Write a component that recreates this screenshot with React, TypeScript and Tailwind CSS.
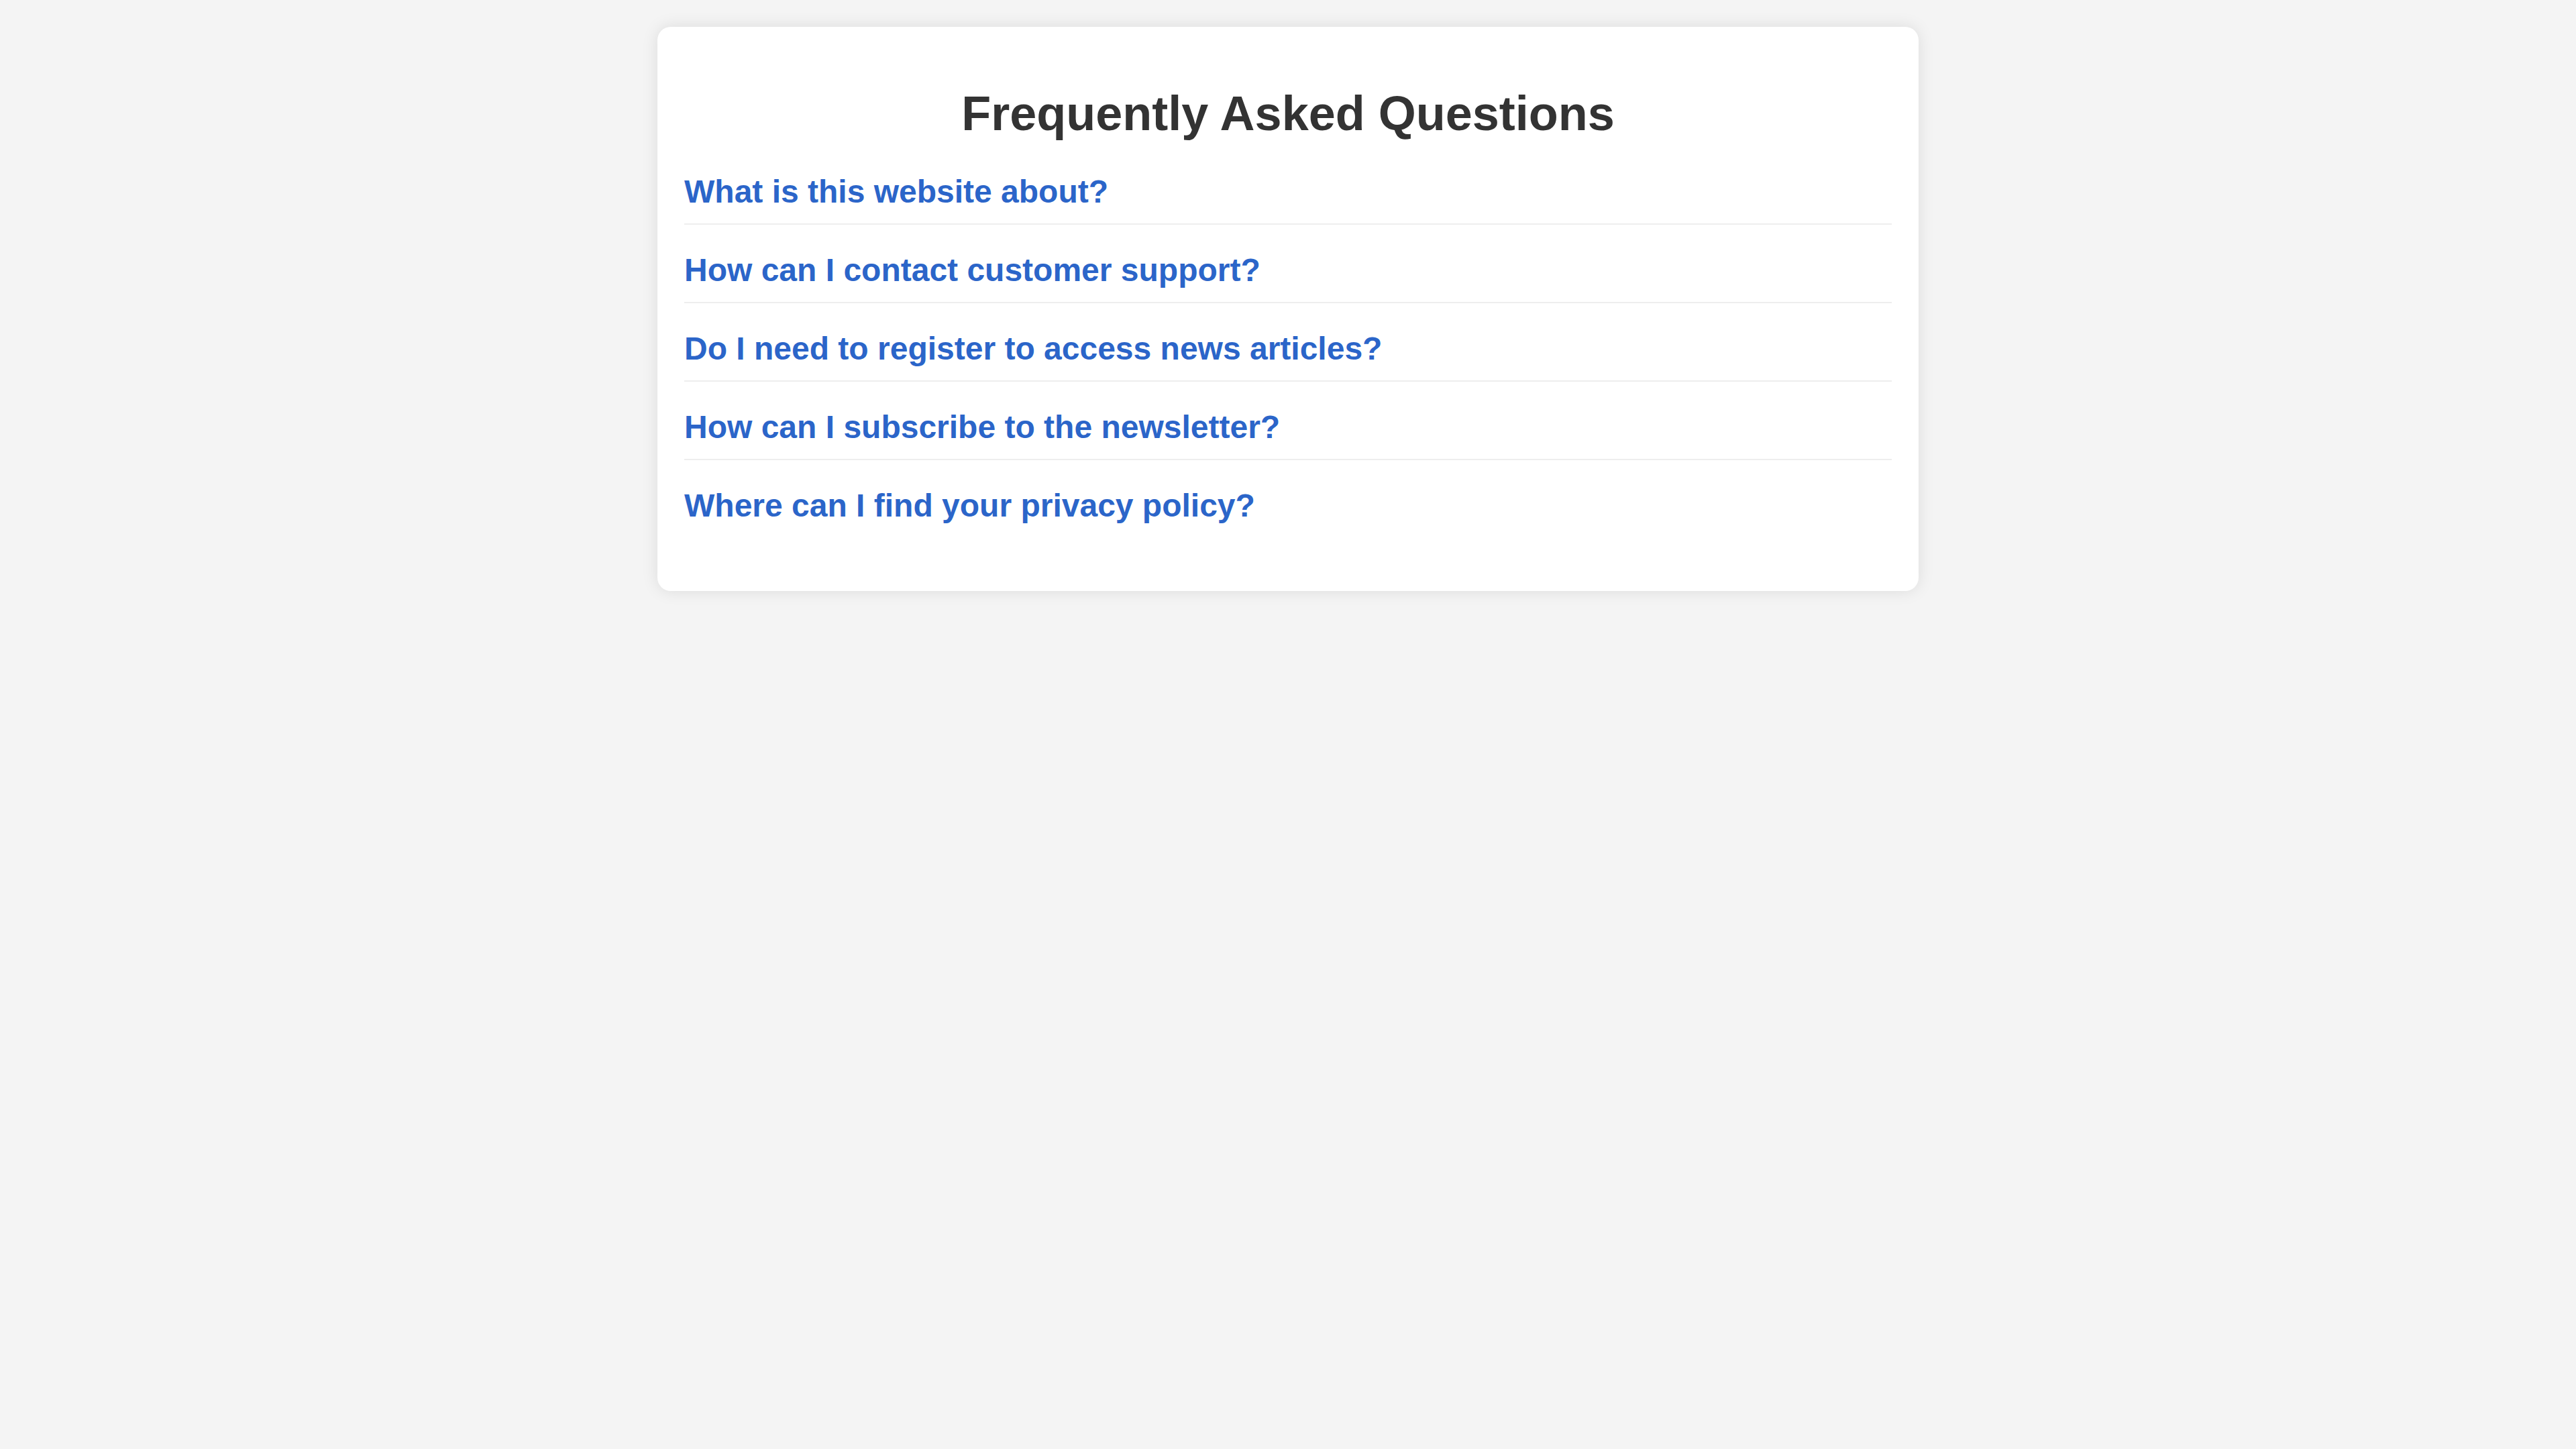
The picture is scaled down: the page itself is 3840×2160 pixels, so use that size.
const FAQS = [
  "What is this website about?",
  "How can I contact customer support?",
  "Do I need to register to access news articles?",
  "How can I subscribe to the newsletter?",
  "Where can I find your privacy policy?",
];

export default function App() {
  return (
    <div
      className="min-h-screen bg-[#f4f4f4] pt-[40px]"
      style={{ fontFamily: '"Liberation Sans", Arial, sans-serif' }}
    >
      <div className="mx-auto w-[1880px] rounded-[20px] bg-white px-[40px] pt-[40px] pb-[40px] shadow-[0_0_25px_rgba(0,0,0,0.1)]">
        <h1 className="mt-[48px] mb-[47px] text-center text-[72px] font-bold leading-[83px] text-[#333333]">
          Frequently Asked Questions
        </h1>
        {FAQS.map((q, i) => {
          const isFirst = i === 0;
          const isLast = i === FAQS.length - 1;
          return (
            <div
              key={q}
              className={
                (isFirst ? "pt-0 " : "pt-[40px] ") +
                (isLast ? "pb-[60px]" : "border-b-[2px] border-[#eeeeee] pb-[20px]")
              }
            >
              <h3 className="cursor-pointer text-[48px] font-bold leading-[55px] text-[#2b65c9]">{q}</h3>
            </div>
          );
        })}
      </div>
    </div>
  );
}
